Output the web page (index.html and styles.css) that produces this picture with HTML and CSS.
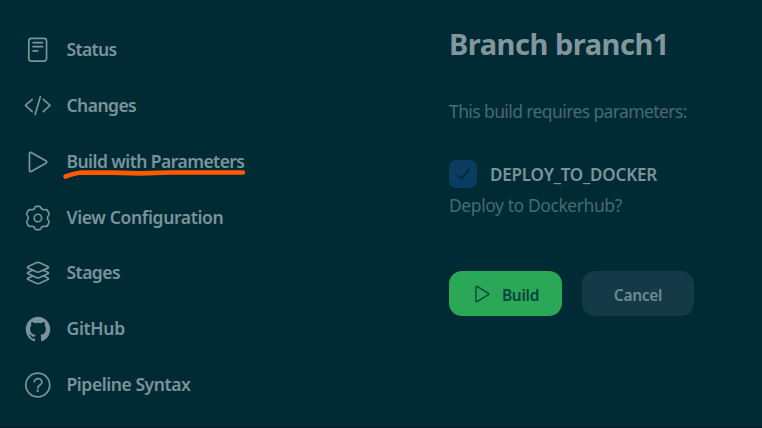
FILE: index.html
```html
<!DOCTYPE html>
<html lang="en">
<head>
<meta charset="utf-8">
<title>Branch branch1</title>
<link rel="stylesheet" href="styles.css">
</head>
<body>
<div class="page">
  <nav class="tasks">
    <a class="task"><svg class="icon" viewBox="0 0 512 512"><rect x="88" y="42" width="324" height="418" rx="48"/><path d="M166 120h172M166 196h172M166 272h84"/></svg><span class="t-status">Status</span></a>
    <a class="task"><svg class="icon" viewBox="0 0 512 512"><path d="M150 358L26 246l124-112M352 358l124-112-124-112M300 84l-96 328"/></svg><span class="t-changes">Changes</span></a>
    <a class="task"><svg class="icon" viewBox="0 0 512 512"><path d="M100 101v310c0 17.440 17 28.520 31 20.160l275-158.370c12.120-7.250 12.120-26.330 0-33.580L131 80.840c-14-8.360-31 2.720-31 20.160z"/></svg><span class="t-build">Build with Parameters</span><svg class="underline" viewBox="0 0 184 12"><path d="M3.500 8.500C10 6 15 4.700 22 4.500L50 4.600L78 5.400L108 4.500L181 4.500"/></svg></a>
    <a class="task"><svg class="icon gear" viewBox="0 0 28 28"><path d="M12.200 2.400H15.600Q16.600 2.400 16.900 3.500Q17.300 5.600 19.300 5.600Q20.400 5.800 22 5.600Q23 5.600 23.500 6.500L25 9.300Q25.500 10.300 24.700 11.200Q23.500 12.400 23.500 14Q23.500 15.600 24.700 16.800Q25.500 17.700 25 18.700L23.500 21.500Q23 22.400 22 22.400Q20.400 22.200 19.300 22.400Q17.300 22.600 16.900 24.500Q16.600 25.600 15.600 25.600H12.200Q11.200 25.600 10.900 24.500Q10.500 22.600 8.500 22.400Q7.400 22.200 5.800 22.400Q4.800 22.400 4.300 21.500L2.800 18.700Q2.300 17.700 3.100 16.800Q4.300 15.600 4.300 14Q4.300 12.400 3.100 11.200Q2.300 10.300 2.800 9.300L4.300 6.500Q4.800 5.600 5.800 5.600Q7.400 5.800 8.500 5.600Q10.500 5.600 10.900 3.500Q11.200 2.400 12.200 2.400Z"/><circle cx="13.900" cy="14" r="3.700"/></svg><span class="t-config">View Configuration</span></a>
    <a class="task"><svg class="icon" viewBox="0 0 512 512"><path d="M434.800 137.650l-149.360-68.100c-16.190-7.400-42.690-7.400-58.880 0L77.300 137.650c-17.600 8-17.600 21.090 0 29.090l148 67.500c16.890 7.700 44.690 7.700 61.580 0l148-67.500c17.520-8 17.520-21.100-.08-29.090zM160 308.520l-82.700 37.110c-17.600 8-17.600 21.100 0 29.100l148 67.500c16.890 7.690 44.690 7.690 61.580 0l148-67.500c17.600-8 17.600-21.100 0-29.100l-79.940-38.470M160 204.480l-82.800 37.160c-17.600 8-17.600 21.100 0 29.100l148 67.490c16.890 7.700 44.690 7.700 61.580 0l148-67.490c17.700-8 17.700-21.100.1-29.100L352 204.480"/></svg><span class="t-stages">Stages</span></a>
    <a class="task"><svg class="icon github" viewBox="0 0 512 512"><path d="M256 32C132.300 32 32 134.900 32 261.700c0 101.500 64.200 187.500 153.200 217.900a17.560 17.560 0 0 0 3.800.4c8.300 0 11.500-6.100 11.500-11.400 0-5.500-.2-19.900-.3-39.100a102.400 102.400 0 0 1-22.600 2.700c-43.100 0-52.900-33.500-52.900-33.500-10.200-26.500-24.900-33.600-24.900-33.600-19.500-13.700-.1-14.100 1.400-14.100h.1c22.500 2 34.300 23.800 34.300 23.800 11.200 19.600 26.200 25.100 39.600 25.100a63 63 0 0 0 25.600-6c2-14.800 7.800-24.900 14.200-30.700-49.700-5.800-102-25.500-102-113.500 0-25.100 8.700-45.600 23-61.600-2.300-5.800-10-29.200 2.200-60.800a18.640 18.640 0 0 1 5-.5c8.100 0 26.400 3.100 56.600 24.100a208.210 208.210 0 0 1 112.200 0c30.200-21 48.500-24.100 56.600-24.100a18.640 18.640 0 0 1 5 .5c12.200 31.600 4.500 55 2.200 60.800 14.300 16.100 23 36.600 23 61.600 0 88.200-52.400 107.600-102.300 113.300 8 7.100 15.200 21.100 15.200 42.500 0 30.700-.3 55.500-.3 63 0 5.400 3.100 11.500 11.400 11.500a19.350 19.350 0 0 0 4-.4C415.900 449.200 480 363.100 480 261.700 480 134.900 379.700 32 256 32z"/></svg><span class="t-github">GitHub</span></a>
    <a class="task"><svg class="icon" viewBox="0 0 512 512"><circle cx="252" cy="256" r="218"/><path d="M190 194s1-22 24-40c14-11 30-14 44-14 14 0 26 2 33 6 13 6 37 21 37 53 0 33-22 49-46 66s-31 33-31 46"/><circle class="dot" cx="250" cy="362" r="22"/></svg><span class="t-syntax">Pipeline Syntax</span></a>
  </nav>
  <main class="main">
    <h1>Branch branch1</h1>
    <p class="intro">This build requires parameters:</p>
    <label class="param"><span class="check"><svg viewBox="0 0 28 28"><path d="M8.500 15l4 4L20 9.500"/></svg></span><span class="name">DEPLOY_TO_DOCKER</span></label>
    <p class="desc">Deploy to Dockerhub?</p>
    <div class="actions">
      <button class="btn primary"><svg viewBox="0 0 512 512"><path d="M100 81v350c0 17.440 17 28.520 31 20.160l290-178.370c12.120-7.250 12.120-26.330 0-33.580L131 60.840c-14-8.360-31 2.720-31 20.160z"/></svg><span>Build</span></button>
      <button class="btn secondary"><span>Cancel</span></button>
    </div>
  </main>
</div>
</body>
</html>
```
FILE: styles.css
```css
* { box-sizing: border-box; }
body { margin: 0; background: #002b34; font-family: "Noto Sans", "Open Sans", sans-serif; color: #7b939b; }
.page { display: grid; grid-template-columns: 449px 1fr; height: 428px; overflow: hidden; border-bottom: 1px solid #00212a; }
.tasks { padding: 22px 0 0 24px; }
.task { position: relative; display: flex; align-items: flex-start; gap: 14.500px; height: 55.850px; padding-top: 14px; font-size: 17.500px; font-weight: 600; line-height: 26px; letter-spacing: -0.550px; white-space: nowrap; }
.t-status { letter-spacing: -0.650px; }
.t-config { letter-spacing: -0.350px; }
.t-syntax { letter-spacing: -0.430px; }
.t-github { letter-spacing: -0.300px; }
.icon { width: 28px; height: 28px; flex: none; fill: none; stroke: currentColor; stroke-width: 31; stroke-linecap: round; stroke-linejoin: round; }
.gear { stroke-width: 1.600; }
.github, .dot { fill: currentColor; stroke: none; }
.underline { position: absolute; left: 38px; top: 34px; width: 184px; height: 12px; fill: none; stroke: #ff5a00; stroke-width: 4.600; stroke-linecap: round; stroke-linejoin: round; }
.main { padding-top: 23px; }
h1 { margin: 0; font-size: 29px; font-weight: 700; line-height: 42px; letter-spacing: -0.480px; color: #82969c; white-space: nowrap; }
p { margin: 0; font-size: 17.500px; line-height: 26px; letter-spacing: -0.600px; color: #486a72; white-space: nowrap; }
.intro { margin-top: 33px; }
.param { display: flex; align-items: center; gap: 13px; height: 28px; margin-top: 36px; font-size: 17px; font-weight: 600; letter-spacing: -0.180px; }
.check { width: 28px; height: 28px; border-radius: 7px; background: #0b3c61; }
.check svg { display: block; width: 28px; height: 28px; fill: none; stroke: #052d40; stroke-width: 2.200; stroke-linecap: round; stroke-linejoin: round; }
.desc { margin-top: 4px; letter-spacing: -0.420px; }
.actions { display: flex; gap: 20px; margin-top: 53px; }
.btn { display: flex; align-items: center; justify-content: center; height: 45px; border: 0; border-radius: 13px; padding: 0; font: 600 15.500px "Noto Sans", sans-serif; letter-spacing: -0.300px; }
.btn span { padding-top: 2px; }
.btn svg { width: 20px; height: 20px; fill: none; stroke: currentColor; stroke-width: 34; stroke-linejoin: round; }
.primary { width: 113px; gap: 10px; background: #2aa857; color: #06443d; }
.secondary { width: 112px; background: #143947; color: #6f8994; }
```
